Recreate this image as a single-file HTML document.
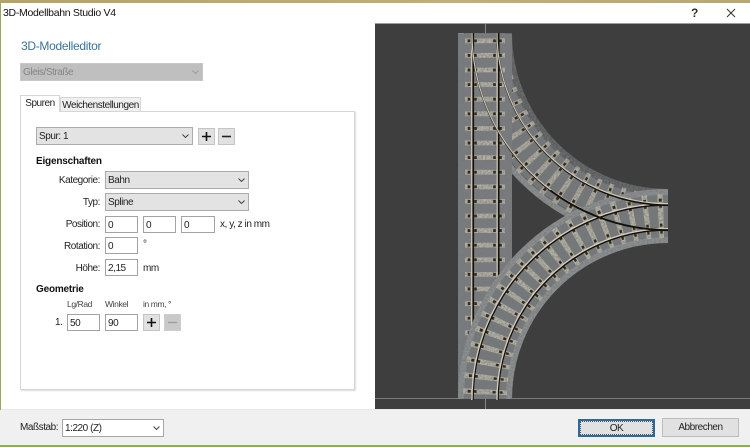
<!DOCTYPE html>
<html lang="de"><head><meta charset="utf-8"><title>3D-Modellbahn Studio V4</title>
<style>
html,body{margin:0;padding:0}
body{width:750px;height:447px;overflow:hidden;position:relative;background:#fff;font-family:"Liberation Sans",sans-serif;font-size:10px;letter-spacing:-.45px;color:#222}
.a{position:absolute;white-space:nowrap}
.t{position:absolute;white-space:nowrap;line-height:14px;height:14px}
.h{font-weight:bold;letter-spacing:-.2px;color:#111}
.s{font-size:8.5px;letter-spacing:-.4px;color:#444}
.r{text-align:right;width:70px;left:30px}
.c{position:absolute;box-sizing:border-box;background:#e3e3e3;border:1px solid #ababab;line-height:18px;padding-left:2px;height:18px}
.c svg{position:absolute;right:3px;top:6px}
.i{position:absolute;box-sizing:border-box;background:#fff;border:1px solid #a3a3a3;width:33px;height:17px;line-height:17px;padding-left:2px}
.b{position:absolute;box-sizing:border-box;background:#e1e1e1;border:1px solid #c4c4c4;width:17px;height:17px;text-align:center}
</style></head><body>
<div class="a" style="left:0;top:0;width:750px;height:3px;background:linear-gradient(90deg,#b3a468,#c2ae78 60%,#b7a872)"></div>
<div class="a" style="left:0;top:3px;width:1px;height:442px;background:#9aa85a"></div>
<div class="a" style="left:0;top:445px;width:750px;height:2px;background:#8eae5c"></div>
<div class="t" style="left:3px;top:6px;font-size:10.5px;letter-spacing:-.3px;color:#111">3D-Modellbahn Studio V4</div>
<div class="t" style="left:691px;top:6px;font-size:12px;font-weight:bold;color:#333">?</div>
<svg class="a" style="left:726px;top:8px" width="10" height="10"><path d="M1 1L9 9M9 1L1 9" stroke="#333" stroke-width="1" fill="none"/></svg>
<div class="t" style="left:21px;top:39px;font-size:12px;letter-spacing:-.3px;color:#3b7299">3D-Modelleditor</div>

<div class="c" style="left:20px;top:63px;width:183px;background:#bfbfbf;border-color:#c6c6c6;color:#858585">Gleis/Straße<svg width="7" height="4"><path d="M.5 .5L3.5 3.5L6.5 .5" stroke="#9a9a9a" fill="none"/></svg></div>

<div class="a" style="left:20px;top:111px;width:335px;height:279px;box-sizing:border-box;background:#fff;border:1px solid #d6d6d6;box-shadow:1px 1px 1px #ddd"></div>
<div class="a" style="left:60px;top:97px;width:81px;height:14px;box-sizing:border-box;background:#f0f0f0;border:1px solid #d6d6d6;border-bottom:0;line-height:15px;text-align:center">Weichenstellungen</div>
<div class="a" style="left:20px;top:95px;width:40px;height:17px;box-sizing:border-box;background:#fff;border:1px solid #d6d6d6;border-bottom:0;line-height:16px;text-align:center">Spuren</div>

<div class="c" style="left:36px;top:127px;width:157px">Spur: 1<svg width="7" height="4"><path d="M.5 .5L3.5 3.5L6.5 .5" stroke="#444" fill="none"/></svg></div>
<div class="b" style="left:198px;top:128px"><svg width="15" height="15" style="display:block"><path d="M7.5 3V12M3 7.5H12" stroke="#111" stroke-width="1.6"/></svg></div>
<div class="b" style="left:218px;top:128px"><svg width="15" height="15" style="display:block"><path d="M3 7.5H12" stroke="#222" stroke-width="1.6"/></svg></div>

<div class="t h" style="left:36px;top:155px">Eigenschaften</div>
<div class="t r" style="top:174px">Kategorie:</div>
<div class="c" style="left:105px;top:171px;width:144px">Bahn<svg width="7" height="4"><path d="M.5 .5L3.5 3.5L6.5 .5" stroke="#444" fill="none"/></svg></div>
<div class="t r" style="top:196px">Typ:</div>
<div class="c" style="left:105px;top:193px;width:144px">Spline<svg width="7" height="4"><path d="M.5 .5L3.5 3.5L6.5 .5" stroke="#444" fill="none"/></svg></div>
<div class="t r" style="top:218px">Position:</div>
<div class="i" style="left:105px;top:216px">0</div>
<div class="i" style="left:143px;top:216px">0</div>
<div class="i" style="left:181px;top:216px;width:34px">0</div>
<div class="t" style="left:220px;top:218px">x, y, z in mm</div>
<div class="t r" style="top:240px">Rotation:</div>
<div class="i" style="left:105px;top:237px">0</div>
<div class="t" style="left:143px;top:238px">°</div>
<div class="t r" style="top:262px">Höhe:</div>
<div class="i" style="left:105px;top:259px">2,15</div>
<div class="t" style="left:143px;top:262px">mm</div>

<div class="t h" style="left:36px;top:283px">Geometrie</div>
<div class="t s" style="left:67px;top:297px">Lg/Rad</div>
<div class="t s" style="left:105px;top:297px">Winkel</div>
<div class="t s" style="left:143px;top:297px">in mm, °</div>
<div class="t" style="left:55px;top:316px">1.</div>
<div class="i" style="left:67px;top:314px">50</div>
<div class="i" style="left:105px;top:314px">90</div>
<div class="b" style="left:143px;top:314px"><svg width="15" height="15" style="display:block"><path d="M7.5 3V12M3 7.5H12" stroke="#111" stroke-width="1.6"/></svg></div>
<div class="b" style="left:164px;top:314px;background:#c9c9c9;border-color:#cdcdcd"><svg width="15" height="15" style="display:block"><path d="M3 7.5H12" stroke="#9a9a9a" stroke-width="1.2"/></svg></div>

<svg class="a" style="left:375px;top:23px;filter:blur(.35px)" width="375" height="387" viewBox="375 23 375 387">
<defs>
<filter id="n" filterUnits="userSpaceOnUse" x="450" y="30" width="225" height="375">
<feTurbulence type="fractalNoise" baseFrequency=".55" numOctaves="2" seed="4" result="t"/>
<feColorMatrix in="t" type="matrix" values="0 0 0 0 .18  0 0 0 0 .18  0 0 0 0 .18  1.6 0 0 0 -.5" result="d"/>
<feComposite in="d" in2="SourceAlpha" operator="in" result="m"/>
<feMerge><feMergeNode in="SourceGraphic"/><feMergeNode in="m"/></feMerge>
</filter>
<clipPath id="e"><rect x="545" y="190" width="130" height="60"/></clipPath>
</defs>
<rect x="375" y="23" width="375" height="387" fill="#3e3e3e"/>
<rect x="375" y="23" width="375" height="1" fill="#9c9c9c"/>
<rect x="375" y="398" width="375" height="1" fill="#7c7c7c"/>
<rect x="485" y="24" width="1" height="386" fill="#858585"/>

<!-- upper curve -->
<g filter="url(#n)" fill="none">
<path d="M485 33A183 183 0 0 0 668 216" stroke="#595c5e" stroke-width="54"/>
<path d="M461 33A207 207 0 0 0 668 240" stroke="#8b8f90" stroke-width="6"/>
<path d="M485 33A183 183 0 0 0 668 216" stroke="#73777a" stroke-width="40"/>
<path d="M485 33A183 183 0 0 0 668 216" stroke="#aeac9f" stroke-width="44" pathLength="20" stroke-dasharray=".36 .64" stroke-dashoffset="-.32"/>
</g>
<g fill="none" stroke="#33291f" stroke-width="3">
<path d="M469 33A199 199 0 0 0 668 232" pathLength="20" stroke-dasharray=".18 .82" stroke-dashoffset="-.41"/>
<path d="M475 33A193 193 0 0 0 668 226" pathLength="20" stroke-dasharray=".18 .82" stroke-dashoffset="-.41"/>
<path d="M494 33A174 174 0 0 0 668 207" pathLength="20" stroke-dasharray=".18 .82" stroke-dashoffset="-.41"/>
<path d="M501 33A167 167 0 0 0 668 200" pathLength="20" stroke-dasharray=".18 .82" stroke-dashoffset="-.41"/>
</g>

<!-- straight -->
<g filter="url(#n)">
<rect x="458" y="34" width="54" height="365" fill="#797d80"/>
<line x1="485" y1="34" x2="485" y2="399" stroke="#b4b2a5" stroke-width="40" pathLength="25" stroke-dasharray=".33 .67" stroke-dashoffset="-.3"/>
</g>
<g stroke="#33291f" stroke-width="2.6">
<line x1="469" y1="34" x2="469" y2="399" pathLength="25" stroke-dasharray=".2 .8" stroke-dashoffset="-.365"/>
<line x1="475.5" y1="34" x2="475.5" y2="399" pathLength="25" stroke-dasharray=".2 .8" stroke-dashoffset="-.365"/>
<line x1="494.5" y1="34" x2="494.5" y2="399" pathLength="25" stroke-dasharray=".2 .8" stroke-dashoffset="-.365"/>
<line x1="500.5" y1="34" x2="500.5" y2="399" pathLength="25" stroke-dasharray=".2 .8" stroke-dashoffset="-.365"/>
</g>

<!-- rails upper + straight -->
<g fill="none">
<path d="M473.2 33V399M498.6 33V399" stroke="#15100c" stroke-width="1.8"/>
<path d="M471.7 33V400M497.2 33V400" stroke="#cfc8b8" stroke-width="1.2"/>
<path d="M472 33A197.2 197.2 0 0 0 668 230.2M497 33A172.2 172.2 0 0 0 668 205.2" stroke="#15100c" stroke-width="1.8"/>
<path d="M472 33A195.6 195.6 0 0 0 668 228.6M497 33A170.6 170.6 0 0 0 668 203.6" stroke="#cfc8b8" stroke-width="1.2"/>
</g>

<!-- lower curve -->
<g filter="url(#n)" fill="none">
<path d="M485 399A183 183 0 0 1 668 216" stroke="#8c9092" stroke-width="54"/>
<path d="M485 399A183 183 0 0 1 668 216" stroke="#74797b" stroke-width="42"/>
<path d="M485 399A183 183 0 0 1 668 216" stroke="#b4b2a4" stroke-width="44" pathLength="20" stroke-dasharray=".36 .64" stroke-dashoffset="-.32"/>
</g>
<g fill="none" stroke="#33291f" stroke-width="3">
<path d="M469 399A199 199 0 0 1 668 200" pathLength="20" stroke-dasharray=".18 .82" stroke-dashoffset="-.41"/>
<path d="M475 399A193 193 0 0 1 668 206" pathLength="20" stroke-dasharray=".18 .82" stroke-dashoffset="-.41"/>
<path d="M494 399A174 174 0 0 1 668 225" pathLength="20" stroke-dasharray=".18 .82" stroke-dashoffset="-.41"/>
<path d="M501 399A167 167 0 0 1 668 232" pathLength="20" stroke-dasharray=".18 .82" stroke-dashoffset="-.41"/>
</g>
<g fill="none">
<path d="M473 400A195 195 0 0 1 668 205M498 400A170 170 0 0 1 668 230" stroke="#15100c" stroke-width="1.6"/>
<path d="M472 400A196 196 0 0 1 668 203.6M497 400A171 171 0 0 1 668 228.6" stroke="#d6cfbf" stroke-width="1.3"/>
</g>
<!-- upper rails over lower track near the junction -->
<g fill="none" clip-path="url(#e)">
<path d="M472 33A197.2 197.2 0 0 0 668 230.2M497 33A172.2 172.2 0 0 0 668 205.2" stroke="#15100c" stroke-width="1.8"/>
<path d="M497 33A170.6 170.6 0 0 0 668 203.6" stroke="#cfc8b8" stroke-width="1.2"/>
</g>
</svg>

<div class="a" style="left:0;top:410px;width:750px;height:35px;background:#f0f0f0"></div>
<div class="a" style="left:1px;top:409px;width:749px;height:1px;background:#e8e8e8"></div>
<div class="t" style="left:20px;top:421px">Maßstab:</div>
<div class="c" style="left:62px;top:419px;width:102px;background:#fff;border-color:#a6a6a6">1:220 (Z)<svg width="7" height="4"><path d="M.5 .5L3.5 3.5L6.5 .5" stroke="#444" fill="none"/></svg></div>
<div class="a" style="left:578px;top:419px;width:77px;height:18px;box-sizing:border-box;background:#e1e1e1;border:2px solid #2a6a9e;line-height:15px;text-align:center;outline:1px dotted #555;outline-offset:-3px">OK</div>
<div class="a" style="left:662px;top:418px;width:77px;height:19px;box-sizing:border-box;background:#e1e1e1;border:1px solid #bdbdbd;line-height:18px;text-align:center">Abbrechen</div>
</body></html>
